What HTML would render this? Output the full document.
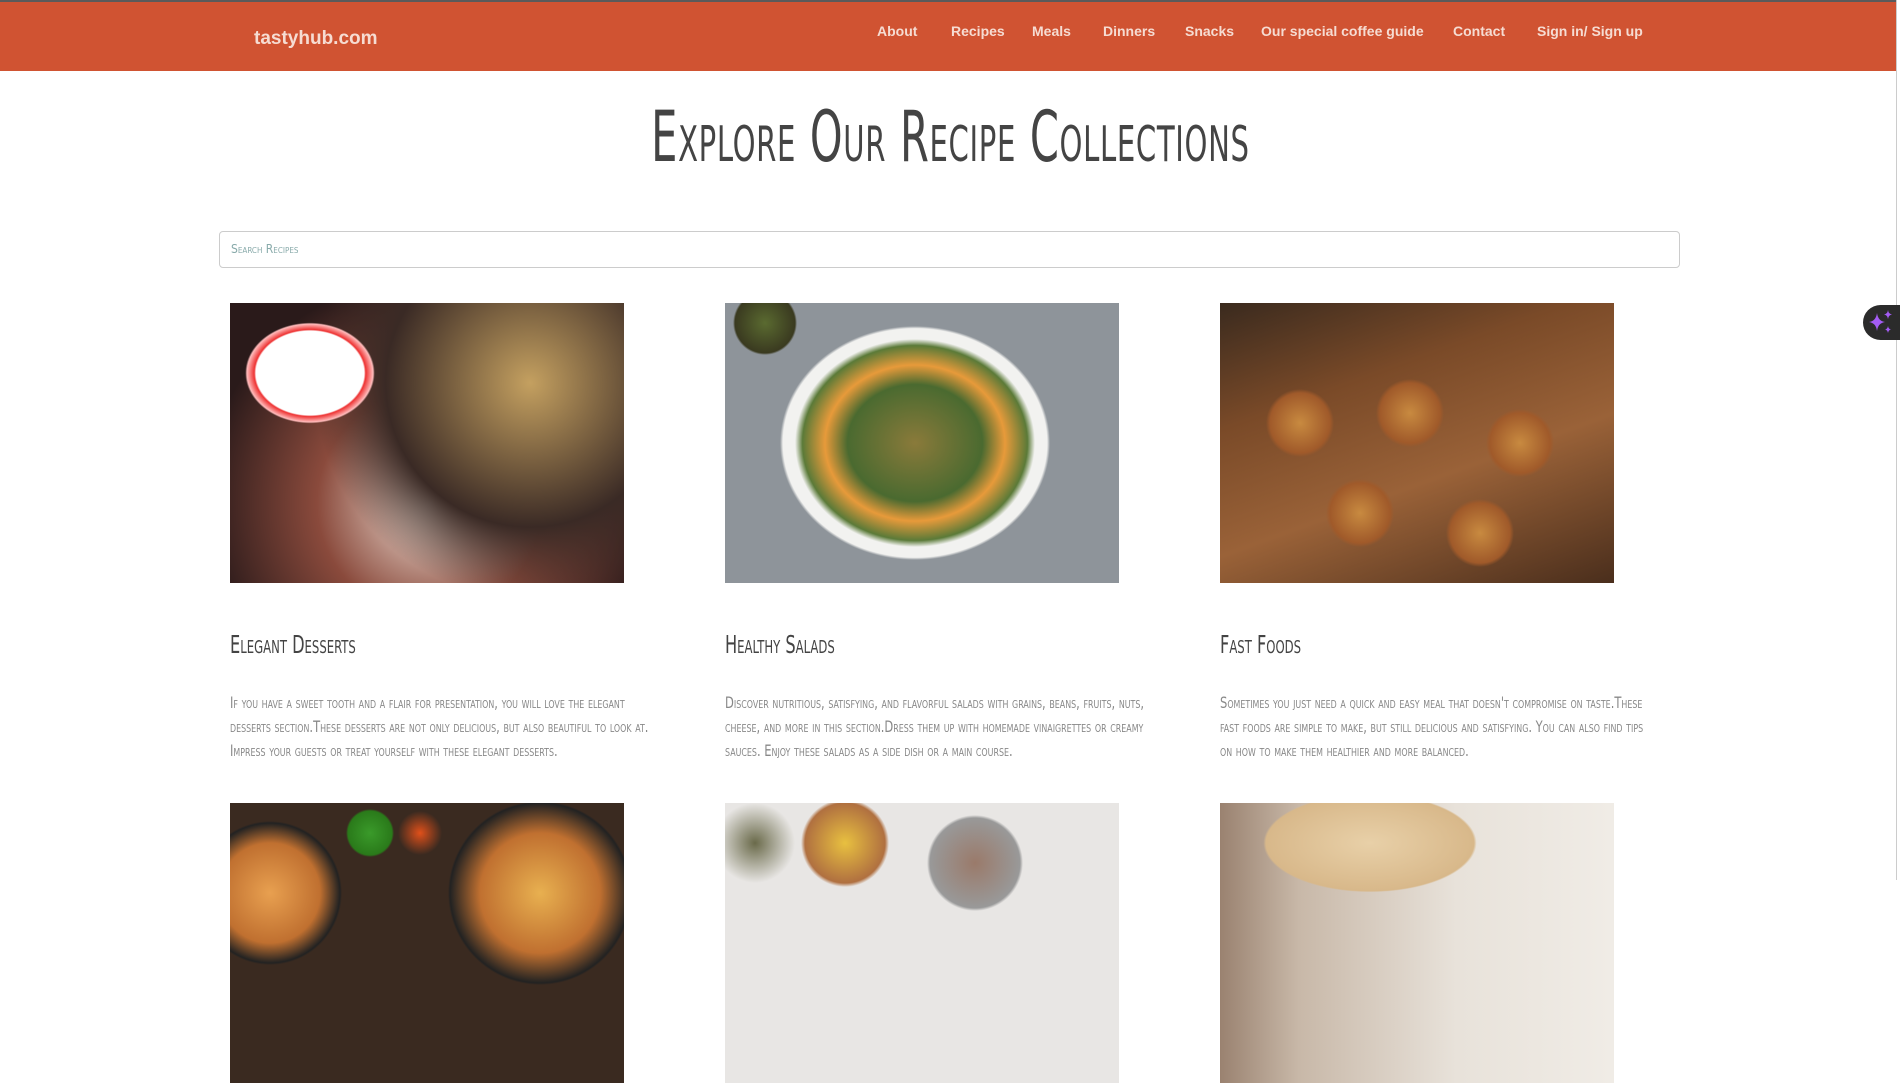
<!DOCTYPE html>
<html><head><meta charset="utf-8"><style>
*{margin:0;padding:0;box-sizing:border-box}
body{width:1900px;height:880px;overflow:hidden;background:#fff;font-family:"Liberation Sans",sans-serif;position:relative}
.top{position:absolute;left:0;top:0;width:1900px;height:2px;background:#5a5a5a}
nav{position:absolute;left:0;top:2px;width:1896px;height:69px;background:#d05332}
.logo{position:absolute;left:254px;top:26px;font-weight:bold;font-size:19px;color:#f6dcd2}
.links{position:absolute;top:21px;font-weight:bold;font-size:14px;color:#f6dcd2}
.sc{font-family:"Liberation Sans Narrow","DejaVu Sans Condensed","Liberation Sans",sans-serif;font-variant:small-caps;}
h1{position:absolute;left:0;width:1900px;top:96px;text-align:center;font-weight:normal;font-size:70px;color:#444;}
h1 span{display:inline-block;transform:scaleX(0.66);letter-spacing:1px}
.search{position:absolute;left:219px;top:231px;width:1461px;height:37px;border:1px solid #ccc;border-radius:4px}
.search span{position:absolute;left:11px;top:10px;font-size:12px;color:#8aa;}
.img{position:absolute;width:394px;height:280px}
.t{position:absolute;font-size:25px;color:#444;transform-origin:left;transform:scaleX(.72);white-space:nowrap}
.d{position:absolute;width:545px;font-size:16px;line-height:24px;color:#888;transform-origin:left top;transform:scaleX(.8)}
.pill{position:absolute;left:1863px;top:305px;width:40px;height:35px;background:#2b2b2b;border-radius:18px 0 0 18px}
.sb{position:absolute;left:1896px;top:0;width:4px;height:880px;background:#fff;border-left:1px solid #ccc}
</style></head><body>
<div class="top"></div>
<nav>
<div class="logo">tastyhub.com</div>
<div class="links" style="left:877px">About</div>
<div class="links" style="left:951px">Recipes</div>
<div class="links" style="left:1032px">Meals</div>
<div class="links" style="left:1103px">Dinners</div>
<div class="links" style="left:1185px">Snacks</div>
<div class="links" style="left:1261px">Our special coffee guide</div>
<div class="links" style="left:1453px">Contact</div>
<div class="links" style="left:1537px">Sign in/ Sign up</div>
</nav>
<div class="sb"></div>
<h1 class="sc"><span>Explore Our Recipe Collections</span></h1>
<div class="search"><span class="sc">Search Recipes</span></div>

<div class="img" style="left:230px;top:303px;background:radial-gradient(ellipse 90px 70px at 80px 70px,#fff 60%,#e33 62%,#fbb 70%,transparent 72%),radial-gradient(circle at 300px 80px,#c4a060 0,#3a2a25 40%,transparent 60%),radial-gradient(circle at 200px 200px,#f3e6dc 0,#8a4a3c 40%,#2a1a1a 80%),#2a1a1a"></div>
<div class="img" style="left:725px;top:303px;background:radial-gradient(ellipse 150px 130px at 190px 140px,#8a7a3a 0,#4a6a30 45%,#e79a3a 60%,#5b7a38 75%,#f2f2f0 80%,#f2f2f0 88%,transparent 90%),radial-gradient(circle at 40px 20px,#5a6a30 0,#3a3a20 30px,transparent 32px),#8e949a"></div>
<div class="img" style="left:1220px;top:303px;background:radial-gradient(circle at 80px 120px,#c88a40 0,#a05a2a 30px,transparent 34px),radial-gradient(circle at 190px 110px,#c88a40 0,#a05a2a 30px,transparent 34px),radial-gradient(circle at 300px 140px,#c88a40 0,#a05a2a 30px,transparent 34px),radial-gradient(circle at 140px 210px,#c88a40 0,#a05a2a 30px,transparent 34px),radial-gradient(circle at 260px 230px,#c88a40 0,#a05a2a 30px,transparent 34px),linear-gradient(160deg,#3a2a1e 0,#7a4a28 30%,#9a6238 60%,#4a2e1c 100%)"></div>

<div class="t sc" style="left:230px;top:630px">Elegant Desserts</div>
<div class="t sc" style="left:725px;top:630px">Healthy Salads</div>
<div class="t sc" style="left:1220px;top:630px">Fast Foods</div>

<div class="d sc" style="left:230px;top:691px">If you have a sweet tooth and a flair for presentation, you will love the elegant desserts section.These desserts are not only delicious, but also beautiful to look at. Impress your guests or treat yourself with these elegant desserts.</div>
<div class="d sc" style="left:725px;top:691px">Discover nutritious, satisfying, and flavorful salads with grains, beans, fruits, nuts, cheese, and more in this section.Dress them up with homemade vinaigrettes or creamy sauces. Enjoy these salads as a side dish or a main course.</div>
<div class="d sc" style="left:1220px;top:691px">Sometimes you just need a quick and easy meal that doesn't compromise on taste.These fast foods are simple to make, but still delicious and satisfying. You can also find tips on how to make them healthier and more balanced.</div>

<div class="img" style="left:230px;top:803px;background:radial-gradient(circle at 140px 30px,#3a9a2a 0,#2a7a1a 22px,transparent 24px),radial-gradient(circle at 190px 30px,#e0501a 0,transparent 22px),radial-gradient(circle at 310px 90px,#e8b050 0,#c07030 60px,#222 90px,transparent 92px),radial-gradient(circle at 40px 90px,#e8a050 0,#c07030 50px,#222 70px,transparent 72px),#3a2a20"></div>
<div class="img" style="left:725px;top:803px;background:radial-gradient(circle at 120px 40px,#e8c040 0,#b07040 40px,transparent 44px),radial-gradient(circle at 250px 60px,#9a7a6a 0,#999 45px,transparent 48px),radial-gradient(circle at 30px 40px,#6a6a4a 0,transparent 40px),#e8e6e4"></div>
<div class="img" style="left:1220px;top:803px;background:radial-gradient(ellipse 130px 60px at 150px 40px,#e8d0a8 0,#d8b88a 80%,transparent 82%),linear-gradient(90deg,#9a8270 0,#c8b8a8 20%,#e8e2da 60%,#f0ece6 100%)"></div>

<div class="pill"><svg width="40" height="35" viewBox="0 0 40 35"><path d="M14 8 Q15 16 22 17 Q15 18 14 26 Q13 18 6 17 Q13 16 14 8Z" fill="#a45cf5"/><path d="M25 5 Q25.5 9 29 9.5 Q25.5 10 25 14 Q24.5 10 21 9.5 Q24.5 9 25 5Z" fill="#a45cf5"/><path d="M25 21 Q25.5 24 28 24.5 Q25.5 25 25 28 Q24.5 25 22 24.5 Q24.5 24 25 21Z" fill="#a45cf5"/></svg></div>
</body></html>
